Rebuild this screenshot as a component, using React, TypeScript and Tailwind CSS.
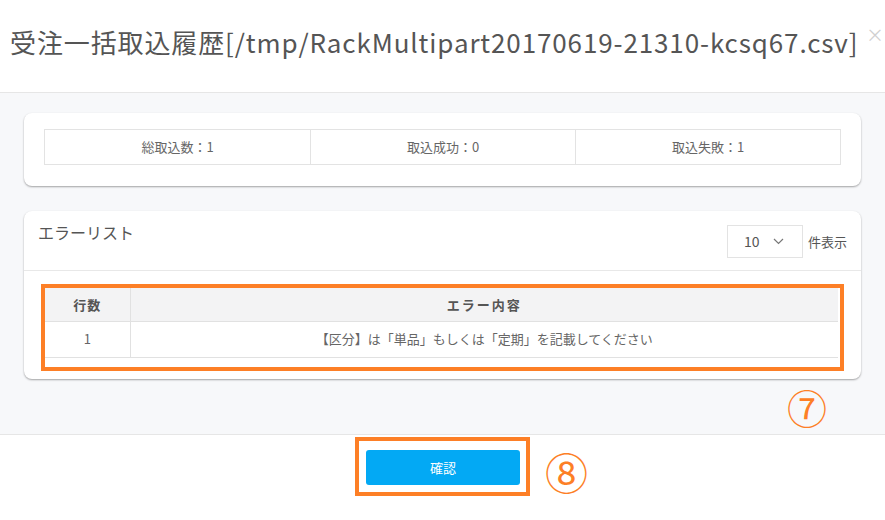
import React from 'react'

const font = { fontFamily: '"Noto Sans CJK JP", "Liberation Sans", sans-serif' }

const stats = ['総取込数：1', '取込成功：0', '取込失敗：1']

export default function App() {
  return (
    <div className="w-[885px] h-[520px] bg-white flex flex-col overflow-hidden text-[#555]" style={font}>
      {/* header */}
      <div className="h-[93px] shrink-0 border-b border-[#e6e6e6] flex items-center pl-[10px] relative">
        <h1 className="text-[26px] font-normal text-[#555] tracking-[0.88px] leading-none -mt-[8px] whitespace-nowrap">
          受注一括取込履歴[/tmp/RackMultipart20170619-21310-kcsq67.csv]
        </h1>
        <span className="absolute right-[1px] top-[25px] text-[18px] leading-none text-[#d0d0d0]">×</span>
      </div>

      {/* body */}
      <div className="h-[342px] shrink-0 bg-[#f7f8fa] border-b border-[#e6e6e6] px-[24px] pt-[20px] flex flex-col">
        <div className="h-[73px] bg-white rounded-[8px] shadow-[0_1px_2px_rgba(0,0,0,0.35)] px-[20px] pt-[16px]">
          <div className="grid grid-cols-3 h-[36px] border border-[#e3e3e3]">
            {stats.map((s, i) => (
              <div
                key={s}
                className={`flex items-center justify-center text-[13px] text-[#666] ${i > 0 ? 'border-l border-[#e3e3e3]' : ''}`}
              >
                {s}
              </div>
            ))}
          </div>
        </div>

        <div className="mt-[25px] h-[168px] bg-white rounded-[8px] shadow-[0_1px_2px_rgba(0,0,0,0.35)] flex flex-col">
          <div className="h-[60px] border-b border-[#e8e8e8] flex items-start justify-between pl-[14px] pr-[14px]">
            <div className="text-[16px] text-[#555] mt-[9px]">エラーリスト</div>
            <div className="flex items-center mt-[14px]">
              <div className="w-[76px] h-[33px] border border-[#e3e3e3] flex items-center pl-[16px] gap-[13px] text-[14px] text-[#555]">
                <span>10</span>
                <svg width="11" height="7" viewBox="0 0 11 7" fill="none" stroke="#777" strokeWidth="1.2">
                  <path d="M1 1l4.5 4.5L10 1" />
                </svg>
              </div>
              <span className="ml-[5px] text-[13px] text-[#555]">件表示</span>
            </div>
          </div>

          <div className="px-[17px] pt-[13px]">
            <div className="border-[4px] border-[#fd7f26] h-[87px] pr-[2px]">
              <table className="w-full border-collapse text-[13px]">
                <thead>
                  <tr className="bg-[#f3f3f4] h-[33px]">
                    <th className="w-[85px] border-r border-b border-[#e1e1e1] font-bold text-[#555] tracking-[1px]">行数</th>
                    <th className="border-b border-[#e1e1e1] font-bold text-[#555] tracking-[2px]">エラー内容</th>
                  </tr>
                </thead>
                <tbody>
                  <tr className="h-[36px]">
                    <td className="border-r border-b border-[#e1e1e1] text-center text-[#666]">1</td>
                    <td className="border-b border-[#e1e1e1] text-center text-[#666]">
                      【区分】は「単品」もしくは「定期」を記載してください
                    </td>
                  </tr>
                </tbody>
              </table>
            </div>
          </div>
        </div>

        <div className="flex justify-end pr-[34px] mt-[8px]">
          <span className="text-[40px] leading-none text-[#fd7f26]">⑦</span>
        </div>
      </div>

      {/* footer */}
      <div className="flex-1 flex justify-center items-start pt-[2px]">
        <div className="relative">
          <div className="border-[4px] border-[#fd7f26] w-[175px] h-[59px] pl-[7px] pt-[9px]">
            <button
              type="button"
              className="w-[154px] h-[35px] rounded-[3px] bg-[#03a9f4] text-white text-[13px]"
            >
              確認
            </button>
          </div>
          <span className="absolute left-[190px] top-[13px] text-[43px] leading-none text-[#fd7f26]">⑧</span>
        </div>
      </div>
    </div>
  )
}
